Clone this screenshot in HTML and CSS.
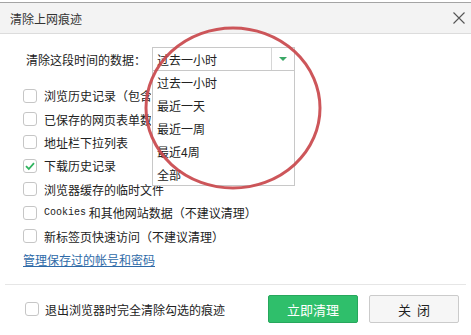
FILE: index.html
```html
<!DOCTYPE html>
<html lang="zh-CN">
<head>
    <meta charset="UTF-8">
    <title>清除上网痕迹</title>
    <link rel="stylesheet" href="styles.css">
</head>
<body>

<div class="dialog">
    <div class="titlebar">
        <span class="title">清除上网痕迹</span>
        <svg class="close-x" width="12" height="12" viewBox="0 0 12 12">
            <path d="M0.5 0.5 L11.5 11.5 M11.5 0.5 L0.5 11.5" stroke="#555" stroke-width="1.1" fill="none"/>
        </svg>
    </div>

    <div class="range-row">
        <span class="range-label">清除这段时间的数据：</span>
        <div class="select">
            <span class="select-value">过去一小时</span>
            <span class="select-btn"><span class="arrow"></span></span>
        </div>
    </div>

    <ul class="items">
        <li class="under"><span class="box"></span><span class="clip">浏览历史记录（包含访问过的网址）</span></li>
        <li class="under"><span class="box"></span><span class="clip">已保存的网页表单数据</span></li>
        <li><span class="box"></span>地址栏下拉列表</li>
        <li><span class="box checked">
            <svg width="12" height="12" viewBox="0 0 12 12"><path d="M2 6.2 L4.8 9 L10 3.2" stroke="#2fb45f" stroke-width="1.8" fill="none"/></svg>
        </span>下载历史记录</li>
        <li><span class="box"></span>浏览器缓存的临时文件</li>
        <li><span class="box"></span><span class="latin">Cookies</span>&nbsp;和其他网站数据（不建议清理）</li>
        <li><span class="box"></span>新标签页快速访问（不建议清理）</li>
    </ul>

    <div class="link-row"><a href="#" class="manage-link">管理保存过的帐号和密码</a></div>

    <div class="separator"></div>

    <div class="footer">
        <label class="exit-opt"><span class="box"></span>退出浏览器时完全清除勾选的痕迹</label>
        <div class="buttons">
            <button class="btn-primary">立即清理</button>
            <button class="btn-close">关&nbsp;&nbsp;闭</button>
        </div>
    </div>

    <!-- open dropdown list -->
    <ul class="dropdown">
        <li>过去一小时</li>
        <li>最近一天</li>
        <li>最近一周</li>
        <li>最近4周</li>
        <li>全部</li>
    </ul>

    <!-- red annotation circle -->
    <svg class="mark" width="471" height="335" viewBox="0 0 471 335">
        <ellipse cx="233" cy="108" rx="87" ry="80" fill="none" stroke="#c9484c" stroke-width="3" opacity="0.92"/>
    </svg>
</div>

</body>
</html>
```

FILE: styles.css
```css
body {
    margin: 0;
    background-color: #fff;
    font-family: "Noto Sans CJK SC", "Microsoft YaHei", sans-serif;
    font-size: 12px;
    color: #222;
}

.dialog {
    position: relative;
    width: 471px;
    height: 335px;
    padding-top: 2px;
    box-sizing: border-box;
    overflow: hidden;
}

.titlebar {
    height: 30px;
    border-top: 1px solid #a4a4a4;
    border-bottom: 1px solid #dcdcdc;
    background-color: #f3f3f3;
    display: flex;
    align-items: center;
    justify-content: space-between;
    padding: 0 6px 0 10px;
}

.title {
    color: #333;
}

.range-row {
    display: flex;
    align-items: center;
    height: 24px;
    margin-top: 13px;
    padding-left: 26px;
}

.range-label {
    width: 126px;
    color: #222;
}

.select {
    width: 143px;
    height: 24px;
    box-sizing: border-box;
    border: 1px solid #c8c8c8;
    display: flex;
    align-items: center;
    background-color: #fff;
}

.select-value {
    flex: 1;
    padding-left: 4px;
}

.select-btn {
    width: 22px;
    height: 22px;
    border-left: 1px solid #d6d6d6;
    display: flex;
    align-items: center;
    justify-content: center;
}

.arrow {
    width: 0;
    height: 0;
    border-left: 4px solid transparent;
    border-right: 4px solid transparent;
    border-top: 4px solid #3aa866;
}

.items {
    list-style: none;
    margin: 13px 0 0;
    padding: 0 0 0 23px;
}

.items li {
    height: 23.4px;
    display: flex;
    align-items: center;
    white-space: nowrap;
}

/* rows partly hidden by the open dropdown */
.items li.under .clip {
    width: 107px;
    overflow: hidden;
}

.box {
    width: 14px;
    height: 14px;
    box-sizing: border-box;
    border: 1px solid #c6c6c6;
    border-radius: 3px;
    background-color: #fff;
    margin-right: 7px;
    flex-shrink: 0;
    display: flex;
    align-items: center;
    justify-content: center;
}

.latin {
    font-family: "Liberation Mono", monospace;
    font-size: 10px;
}

.link-row {
    height: 23.4px;
    display: flex;
    align-items: center;
    padding-left: 23px;
}

.manage-link {
    color: #2e6aa8;
    text-decoration: underline;
}

.separator {
    height: 1px;
    background-color: #e6e6e6;
    margin: 13px 5px 0;
}

.footer {
    display: flex;
    align-items: center;
    justify-content: space-between;
    margin-top: 10px;
    padding: 0 12px 0 25px;
}

.exit-opt {
    display: flex;
    align-items: center;
}

.exit-opt .box {
    margin-right: 6px;
}

.buttons {
    display: flex;
    gap: 11px;
}

button {
    width: 90px;
    height: 28px;
    font-family: inherit;
    font-size: 13px;
    border-radius: 2px;
    cursor: pointer;
}

.btn-primary {
    background-color: #2fbf6b;
    border: 1px solid #27a75c;
    color: #fff;
}

.btn-close {
    background-color: #f6f6f6;
    border: 1px solid #cbcbcb;
    color: #222;
}

.dropdown {
    position: absolute;
    top: 71px;
    left: 152px;
    width: 143px;
    height: 115px;
    box-sizing: border-box;
    margin: 0;
    padding: 0;
    list-style: none;
    background-color: #fff;
    border: 1px solid #c8c8c8;
    border-top: none;
}

.dropdown li {
    height: 23px;
    line-height: 23px;
    padding-left: 4px;
}

.mark {
    position: absolute;
    top: 0;
    left: 0;
    pointer-events: none;
}
```
